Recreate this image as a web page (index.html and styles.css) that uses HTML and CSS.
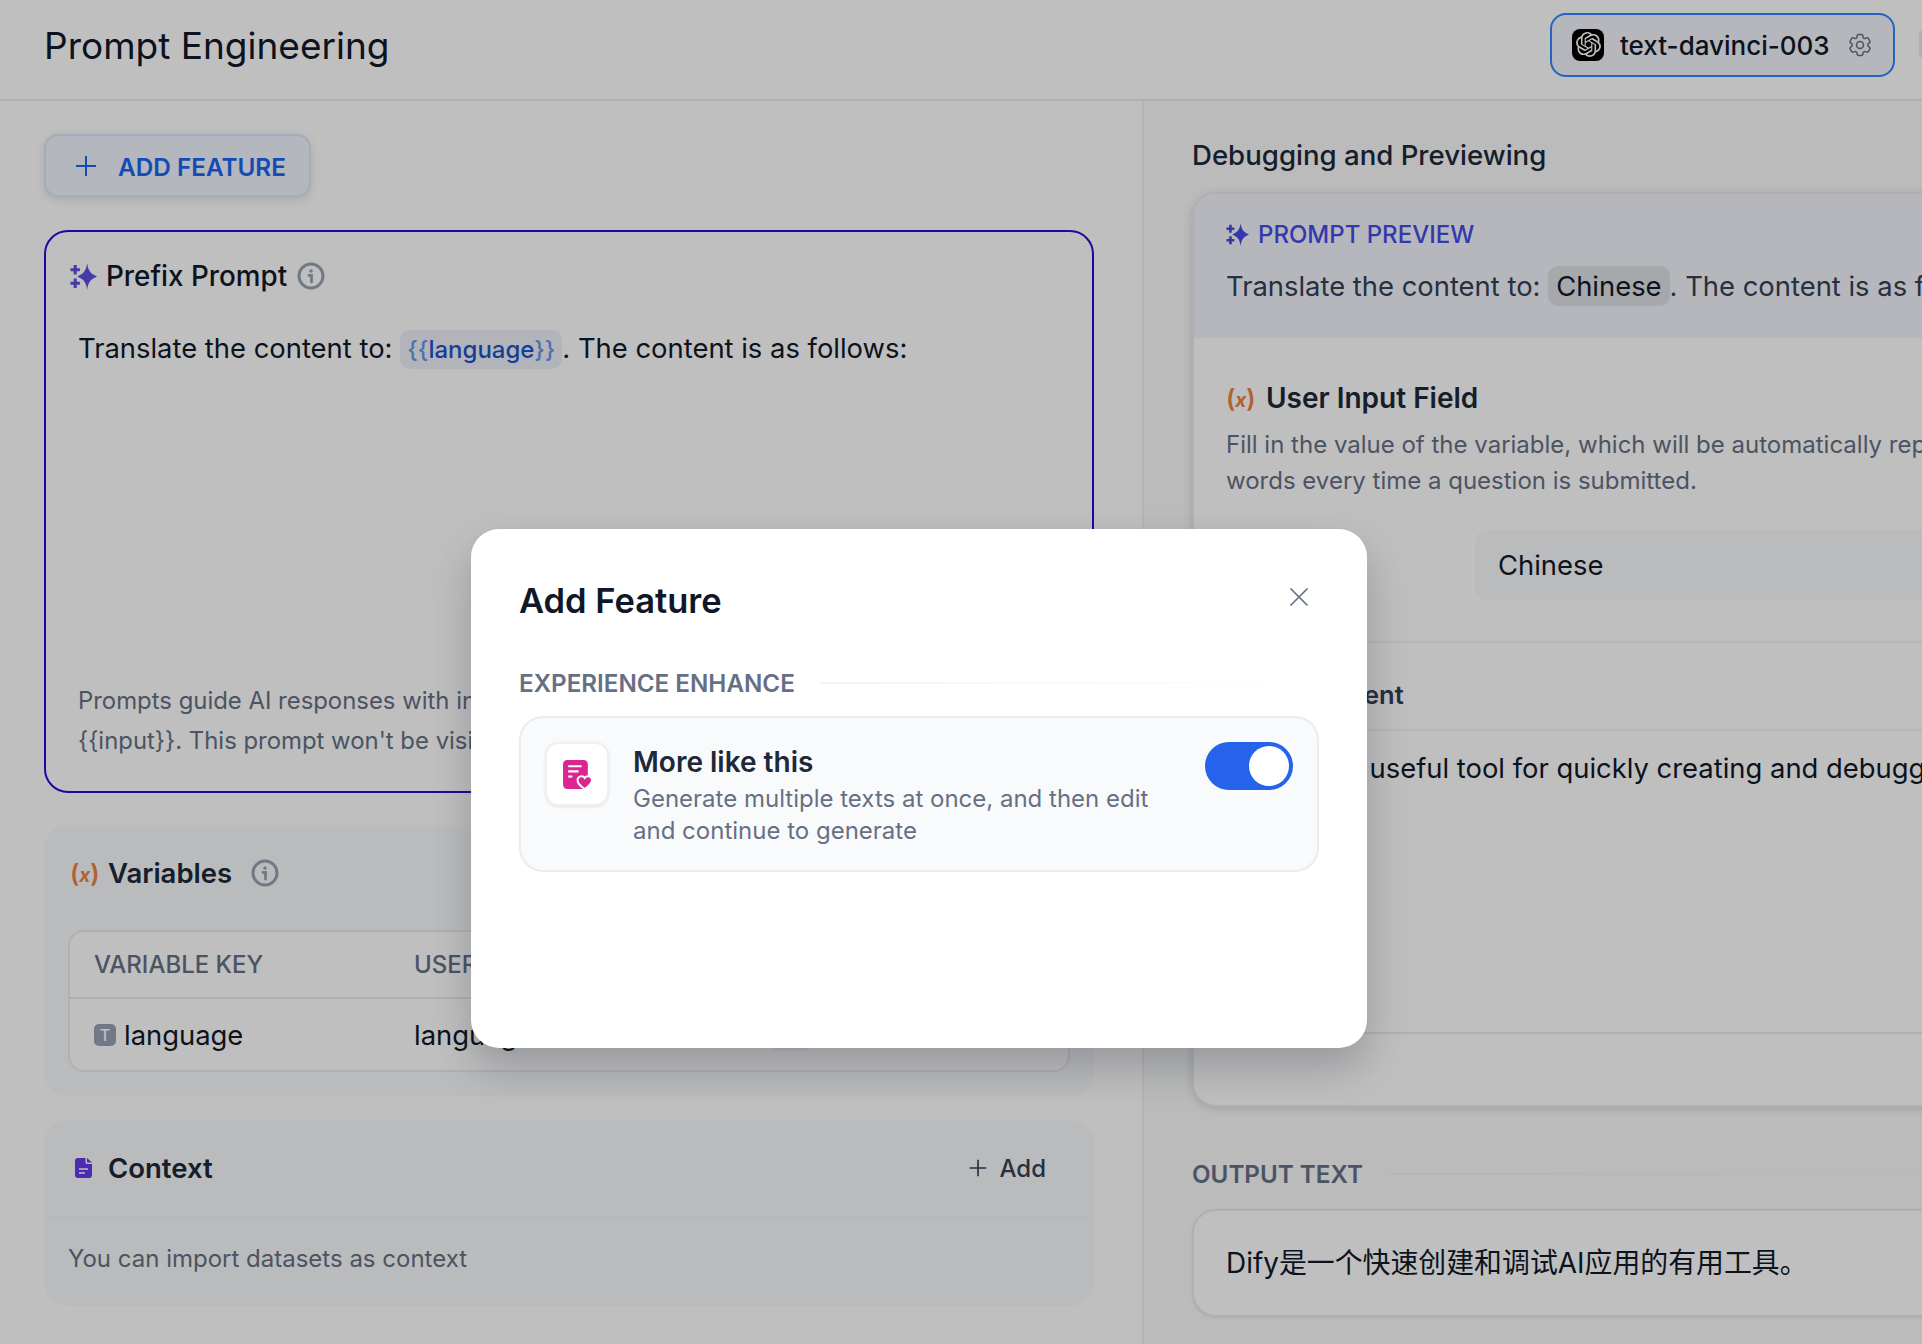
FILE: index.html

```html
<!DOCTYPE html>
<html lang="en">
<head>
  <meta charset="UTF-8" />
  <title>Prompt Engineering</title>
  <link rel="stylesheet" href="styles.css">
</head>
<body>

  <svg class="defs" width="0" height="0">
    <symbol id="sparkles" viewBox="0 0 26 26">
      <path d="M16.500 0c1 7.500 3 10 9.500 13-6.500 3-8.500 5.500-9.500 13-1-7.500-3-10-9.500-13 6.500-3 8.500-5.500 9.500-13z"/>
      <path d="M3.500 2h3v3h3v3h-3v3h-3V8h-3V5h3zM3.500 15h3v3h3v3h-3v3h-3v-3h-3v-3h3z"/>
    </symbol>
    <symbol id="info" viewBox="0 0 28 28">
      <circle cx="14" cy="14" r="12" fill="none" stroke="currentColor" stroke-width="3"/>
      <circle cx="14" cy="9" r="1.800" fill="currentColor"/>
      <path d="M12 13.500h2.500v6.500" fill="none" stroke="currentColor" stroke-width="2.800" stroke-linecap="round"/>
    </symbol>
    <symbol id="plus" viewBox="0 0 24 24">
      <path d="M12 2v20M2 12h20" fill="none" stroke="currentColor" stroke-width="2"/>
    </symbol>
  </svg>

  <header class="topbar">
    <h1 class="page-title">Prompt Engineering</h1>
    <button class="model-btn">
      <span class="model-logo">
        <svg viewBox="0 0 24 24" width="25" height="25" fill="#fff"><path d="M22.2819 9.8211a5.9847 5.9847 0 0 0-.5157-4.9108 6.0462 6.0462 0 0 0-6.5098-2.9A6.0651 6.0651 0 0 0 4.9807 4.1818a5.9847 5.9847 0 0 0-3.9977 2.9 6.0462 6.0462 0 0 0 .7427 7.0966 5.98 5.98 0 0 0 .511 4.9107 6.051 6.051 0 0 0 6.5146 2.9001A5.9847 5.9847 0 0 0 13.2599 24a6.0557 6.0557 0 0 0 5.7718-4.2058 5.9894 5.9894 0 0 0 3.9977-2.9001 6.0557 6.0557 0 0 0-.7475-7.0729zm-9.022 12.6081a4.4755 4.4755 0 0 1-2.8764-1.0408l.1419-.0804 4.7783-2.7582a.7948.7948 0 0 0 .3927-.6813v-6.7369l2.02 1.1686a.071.071 0 0 1 .038.052v5.5826a4.504 4.504 0 0 1-4.4945 4.4944zm-9.6607-4.1254a4.4708 4.4708 0 0 1-.5346-3.0137l.142.0852 4.783 2.7582a.7712.7712 0 0 0 .7806 0l5.8428-3.3685v2.3324a.0804.0804 0 0 1-.0332.0615L9.74 19.9502a4.4992 4.4992 0 0 1-6.1408-1.6464zM2.3408 7.8956a4.485 4.485 0 0 1 2.3655-1.9728V11.6a.7664.7664 0 0 0 .3879.6765l5.8144 3.3543-2.0201 1.1685a.0757.0757 0 0 1-.071 0l-4.8303-2.7865A4.504 4.504 0 0 1 2.3408 7.872zm16.5963 3.8558L13.1038 8.364 15.1192 7.2a.0757.0757 0 0 1 .071 0l4.8303 2.7913a4.4944 4.4944 0 0 1-.6765 8.1042v-5.6772a.79.79 0 0 0-.407-.667zm2.0107-3.0231l-.142-.0852-4.7735-2.7818a.7759.7759 0 0 0-.7854 0L9.409 9.2297V6.8974a.0662.0662 0 0 1 .0284-.0615l4.8303-2.7866a4.4992 4.4992 0 0 1 6.6802 4.66zM8.3065 12.863l-2.02-1.1638a.0804.0804 0 0 1-.038-.0567V6.0742a4.4992 4.4992 0 0 1 7.3757-3.4537l-.142.0805L8.704 5.459a.7948.7948 0 0 0-.3927.6813zm1.0976-2.3654l2.602-1.4998 2.6069 1.4998v2.9994l-2.5974 1.4997-2.6067-1.4997Z"/></svg>
      </span>
      <span class="model-name">text-davinci-003</span>
      <svg class="gear" viewBox="0 0 24 24" width="28" height="28" fill="none" stroke="currentColor" stroke-width="1.300"><path d="M9.594 3.94c.09-.542.56-.94 1.11-.94h2.593c.55 0 1.02.398 1.11.94l.213 1.281c.063.374.313.686.645.87.074.04.147.083.22.127.325.196.72.257 1.075.124l1.217-.456a1.125 1.125 0 0 1 1.37.49l1.296 2.247a1.125 1.125 0 0 1-.26 1.431l-1.003.827c-.293.241-.438.613-.43.992a7.723 7.723 0 0 1 0 .255c-.008.378.137.75.43.991l1.004.827c.424.35.534.955.26 1.43l-1.298 2.247a1.125 1.125 0 0 1-1.369.491l-1.217-.456c-.355-.133-.75-.072-1.076.124a6.47 6.47 0 0 1-.22.128c-.331.183-.581.495-.644.869l-.213 1.281c-.09.543-.56.94-1.11.94h-2.594c-.55 0-1.019-.398-1.11-.94l-.213-1.281c-.062-.374-.312-.686-.644-.87a6.52 6.52 0 0 1-.22-.127c-.325-.196-.72-.257-1.076-.124l-1.217.456a1.125 1.125 0 0 1-1.369-.49l-1.297-2.247a1.125 1.125 0 0 1 .26-1.431l1.004-.827c.292-.24.437-.613.43-.991a6.932 6.932 0 0 1 0-.255c.007-.38-.138-.751-.43-.992l-1.004-.827a1.125 1.125 0 0 1-.26-1.43l1.297-2.247a1.125 1.125 0 0 1 1.37-.491l1.216.456c.356.133.751.072 1.076-.124.072-.044.146-.086.22-.128.332-.183.582-.495.644-.869l.214-1.28Z"/><circle cx="12" cy="12" r="3"/></svg>
    </button>
    <span class="publish-stub"></span>
  </header>

  <main class="workspace">
    <section class="config-pane">
      <button class="add-feature-btn">
        <svg width="24" height="24"><use href="#plus"/></svg>
        ADD FEATURE
      </button>

      <div class="prefix-card">
        <div class="section-head">
          <svg class="sparkle" width="27" height="27"><use href="#sparkles"/></svg>
          <span class="prefix-title">Prefix Prompt</span>
          <svg class="info" width="28" height="28"><use href="#info"/></svg>
        </div>
        <p class="prefix-text">Translate the content to: <span class="var-chip"><i>{{</i>language<i>}}</i></span>. The content is as follows:</p>
        <p class="prefix-hint">Prompts guide AI responses with instructions and constraints.<br>{{input}}. This prompt won't be visible to users.</p>
      </div>

      <div class="variables-card">
        <div class="section-head">
          <span class="var-icon">(<i>x</i>)</span>
          <span class="card-title">Variables</span>
          <svg class="info info-wide" width="28" height="28"><use href="#info"/></svg>
        </div>
        <div class="var-table">
          <div class="var-row var-row-head">
            <span>VARIABLE KEY</span>
            <span>USER INPUT FORM NAME</span>
          </div>
          <div class="var-row">
            <span class="var-key"><b class="type-badge">T</b>language</span>
            <span>language</span>
            <span class="row-chip"></span>
            <span class="row-action"></span>
          </div>
        </div>
      </div>

      <div class="context-card">
        <div class="context-head">
          <span class="doc-box">
            <svg width="17" height="20" viewBox="0 0 17 20"><path d="M3 0h7.500v4.500a1.500 1.500 0 0 0 1.500 1.500h5v11a3 3 0 0 1-3 3H3a3 3 0 0 1-3-3V3a3 3 0 0 1 3-3z" fill="#6938ef"/><path d="M12 0l5 4.500h-5z" fill="#6938ef"/><path d="M4 11h9M4 15h6" stroke="#fff" stroke-width="1.600"/></svg>
          </span>
          <span class="card-title">Context</span>
          <span class="context-add">
            <svg width="20" height="20"><use href="#plus"/></svg>
            Add
          </span>
        </div>
        <p class="context-text">You can import datasets as context</p>
      </div>
    </section>

    <section class="debug-pane">
      <h2 class="debug-title">Debugging and Previewing</h2>

      <div class="debug-card">
        <div class="preview-block">
          <div class="preview-label">
            <svg width="23" height="23"><use href="#sparkles"/></svg>
            PROMPT PREVIEW
          </div>
          <p class="preview-text">Translate the content to: <span class="value-chip">Chinese</span>. The content is as follows:</p>
        </div>

        <div class="input-block">
          <div class="input-head">
            <span class="var-icon">(<i>x</i>)</span>
            <span class="card-title">User Input Field</span>
          </div>
          <p class="input-desc">Fill in the value of the variable, which will be automatically replaced in the prompt<br>words every time a question is submitted.</p>
          <div class="input-row">
            <span class="input-label">language</span>
            <span class="input-value">Chinese</span>
          </div>
        </div>

        <div class="query-head">Query Content</div>
        <div class="query-body">Dify is a useful tool for quickly creating and debugging AI applications.</div>
        <div class="query-foot"></div>
      </div>

      <div class="output-label">
        <span>OUTPUT TEXT</span>
        <span class="fade-line"></span>
      </div>
      <div class="output-box">Dify是一个快速创建和调试AI应用的有用工具。</div>
    </section>
  </main>

  <div class="overlay"></div>

  <div class="modal">
    <div class="modal-head">
      <h3 class="modal-title">Add Feature</h3>
      <svg class="modal-close" width="20" height="20" viewBox="0 0 20 20"><path d="M1.500 1.500l17 17M18.500 1.500l-17 17" fill="none" stroke="currentColor" stroke-width="1.700"/></svg>
    </div>
    <div class="group-label">
      <span>EXPERIENCE ENHANCE</span>
      <span class="fade-line"></span>
    </div>
    <div class="feature-card">
      <span class="feature-tile">
        <svg width="31" height="31" viewBox="0 0 30 30">
          <rect x="1" y="1" width="24" height="28" rx="4" fill="#dd2590"/>
          <path d="M6 7h13M6 12h10" stroke="#fff" stroke-width="2"/>
          <path d="M6 17h4" stroke="#fff" stroke-width="2"/>
          <path d="M22 29c-4-3-7-5-7-8.500a3.800 3.800 0 0 1 7-2 3.800 3.800 0 0 1 7 2c0 3.500-3 5.500-7 8.500z" fill="#dd2590" stroke="#fff" stroke-width="1.800"/>
        </svg>
      </span>
      <div class="feature-text">
        <div class="feature-name">More like this</div>
        <p class="feature-desc">Generate multiple texts at once, and then edit and continue to generate</p>
      </div>
      <span class="toggle"><span class="knob"></span></span>
    </div>
  </div>

</body>
</html>
```

FILE: styles.css

```css
* {
  box-sizing: border-box;
}
html, body {
  margin: 0;
  width: 1922px;
  height: 1344px;
  overflow: hidden;
}
body {
  position: relative;
  background-color: #fff;
  color: #101828;
  font-family: Inter, "Noto Sans CJK SC", sans-serif;
  font-size: 27.400px;
}
p, h1, h2, h3 {
  margin: 0;
}
button {
  font-family: inherit;
}
.defs {
  position: absolute;
}

/* top bar */
.topbar {
  display: flex;
  align-items: center;
  height: 101px;
  padding-left: 44px;
  border-bottom: 2px solid #ebebef;
}
.page-title {
  flex: 1;
  margin-top: -8px;
  font-size: 37px;
  font-weight: 400;
}
.model-btn {
  display: flex;
  align-items: center;
  width: 345px;
  height: 64px;
  margin-top: -10px;
  padding: 0 19px 0 20px;
  background-color: #f2f4fb;
  border: 2px solid #2e86ff;
  border-radius: 16px;
  color: #101828;
}
.model-logo {
  display: flex;
  align-items: center;
  justify-content: center;
  width: 32px;
  height: 32px;
  background-color: #000;
  border-radius: 8px;
}
.model-name {
  flex: 1;
  margin-left: 16px;
  padding-top: 2px;
  text-align: left;
  font-size: 26px;
  font-weight: 500;
  white-space: nowrap;
}
.gear {
  color: #667085;
}
.publish-stub {
  width: 3px;
  height: 26px;
  margin-top: -11px;
  margin-left: 24px;
  background-color: #e8e8ee;
}

/* page columns */
.workspace {
  display: flex;
  height: 1243px;
}
.config-pane {
  flex: none;
  width: 1142px;
  padding: 33px 48px 0 44px;
}
.debug-pane {
  flex: none;
  width: 780px;
  padding: 34px 0 0 48px;
  background-color: #f8faf9;
  border-left: 2px solid #f0f0f2;
}

/* left column */
.add-feature-btn {
  display: flex;
  align-items: center;
  gap: 20px;
  width: 267px;
  height: 63px;
  padding: 2px 0 0 28px;
  background-color: #f1f4fd;
  border: 2px solid #dbe6f8;
  border-radius: 14px;
  box-shadow: 0 3px 8px rgba(16, 24, 40, 0.12);
  color: #1c64f2;
  font-size: 24.300px;
  font-weight: 600;
  white-space: nowrap;
}
.add-feature-btn svg {
  flex: none;
  margin-top: -2px;
}
.prefix-card {
  display: flex;
  flex-direction: column;
  height: 563px;
  margin-top: 33px;
  padding: 22px 24px 30px 24px;
  border: 2px solid #2a0ad8;
  border-radius: 24px;
}
.section-head {
  display: flex;
  align-items: center;
  height: 44px;
}
.sparkle {
  flex: none;
  margin-right: 9px;
  fill: #5d4fe0;
}
.prefix-title {
  font-size: 27.800px;
  font-weight: 500;
}
.info {
  flex: none;
  margin-left: 10px;
  color: #98a2b3;
}
.info-wide {
  margin-left: 19px;
}
.prefix-text {
  margin: 32px 0 0 8px;
  line-height: 34px;
  white-space: nowrap;
}
.var-chip {
  display: inline-block;
  padding: 0 7px;
  height: 39px;
  line-height: 39px;
  background-color: #eff1f9;
  border-radius: 10px;
  color: #1c53c8;
  font-size: 24px;
  font-weight: 500;
}
.var-chip i {
  font-style: normal;
  color: #6a96e6;
}
.prefix-hint {
  margin: auto 0 0 2px;
  padding-left: 6px;
  color: #667085;
  font-size: 23.900px;
  line-height: 40px;
  white-space: nowrap;
}
.var-icon {
  flex: none;
  display: block;
  width: 38px;
  color: #ec8243;
  font-size: 25px;
  font-weight: 600;
  white-space: nowrap;
}
.var-icon i {
  font-size: 19px;
  font-weight: 700;
}
.input-head .var-icon {
  width: 40px;
}
.card-title {
  color: #1d2939;
  font-size: 27.500px;
  font-weight: 600;
}
.input-head .card-title {
  font-size: 28px;
}
.variables-card {
  height: 271px;
  margin-top: 32px;
  padding: 26px 24px 0 26px;
  background-color: #f9fafb;
  border-radius: 24px;
}
.var-table {
  height: 142px;
  margin: 35px 0 0 -2px;
  background-color: #fff;
  border: 2px solid #e9ebf0;
  border-radius: 16px;
}
.var-row {
  display: grid;
  grid-template-columns: 320px 356px 226px 1fr;
  align-items: center;
  height: 71px;
  padding-left: 24px;
  white-space: nowrap;
  overflow: hidden;
}
.var-row-head {
  height: 67px;
  border-bottom: 2px solid #e9ebf0;
  color: #667085;
  font-size: 24px;
  font-weight: 500;
}
.var-key {
  display: flex;
  align-items: center;
  gap: 8px;
}
.type-badge {
  display: flex;
  align-items: center;
  justify-content: center;
  width: 22px;
  height: 22px;
  background-color: #98a2b3;
  border-radius: 5px;
  color: #fff;
  font-size: 16px;
  font-weight: 500;
}
.row-chip {
  width: 40px;
  height: 32px;
  background-color: #f2f4f7;
  border-radius: 8px;
}
.row-action {
  width: 18px;
  height: 26px;
  border-bottom: 3px solid #667085;
}
.context-card {
  height: 186px;
  margin-top: 24px;
  background-color: #f9fafb;
  border-radius: 24px;
}
.context-head {
  display: flex;
  align-items: center;
  height: 97px;
  padding: 0 48px 0 26px;
  border-bottom: 1px solid #f2f4f7;
}
.doc-box {
  display: flex;
  justify-content: center;
  width: 26px;
  margin-right: 12px;
}
.context-add {
  display: flex;
  align-items: center;
  gap: 12px;
  margin-left: auto;
  color: #344054;
  font-size: 24px;
  font-weight: 500;
}
.context-text {
  padding: 24px 0 0 24px;
  color: #667085;
  font-size: 24px;
  line-height: 36px;
  white-space: nowrap;
}

/* right column */
.debug-title {
  height: 40px;
  line-height: 40px;
  color: #1d2939;
  font-size: 27.600px;
  font-weight: 500;
}
.debug-card {
  width: 1000px;
  height: 915px;
  margin-top: 17px;
  background-color: #fff;
  border: 2px solid #ebebef;
  border-radius: 24px;
  box-shadow: 0 2px 8px rgba(16, 24, 40, 0.14);
  overflow: hidden;
}
.preview-block {
  height: 144px;
  padding: 22px 32px 0 32px;
  background-color: #f3f5fd;
}
.preview-label {
  display: flex;
  align-items: center;
  gap: 9px;
  height: 36px;
  color: #444ce7;
  font-size: 24px;
  font-weight: 500;
}
.preview-label svg {
  fill: #444ce7;
}
.preview-text {
  margin-top: 14px;
  line-height: 40px;
  color: #344054;
  white-space: nowrap;
}
.value-chip {
  display: inline-block;
  padding: 0 8px;
  background-color: #dfe0e6;
  border-radius: 10px;
  color: #101828;
}
.input-block {
  height: 305px;
  padding: 40px 32px 0 32px;
  border-bottom: 2px solid #f2f4f7;
}
.input-head {
  display: flex;
  align-items: center;
  height: 40px;
}
.input-desc {
  margin-top: 9px;
  color: #667085;
  font-size: 24px;
  line-height: 36px;
  white-space: nowrap;
}
.input-row {
  display: flex;
  align-items: center;
  margin-top: 31px;
}
.input-label {
  width: 249px;
}
.input-value {
  flex: 1;
  height: 70px;
  line-height: 71px;
  padding-left: 23px;
  background-color: #f9fafb;
  border-radius: 12px;
}
.query-head {
  height: 88px;
  padding: 33px 0 0 29px;
  line-height: 38px;
  border-bottom: 2px solid #f2f4f7;
  color: #344054;
  font-size: 25.500px;
  font-weight: 600;
}
.query-body {
  height: 301px;
  padding: 17px 0 0 64px;
  line-height: 40px;
  white-space: nowrap;
}
.query-foot {
  height: 72px;
  border-top: 2px solid #ebebef;
}
.output-label, .group-label {
  display: flex;
  align-items: center;
  gap: 24px;
  color: #667085;
  font-size: 24.200px;
  font-weight: 600;
  white-space: nowrap;
}
.output-label {
  width: 1000px;
  height: 32px;
  margin-top: 51px;
}
.fade-line {
  flex: 1;
  height: 2px;
  background: linear-gradient(to right, #f2f4f7, rgba(242, 244, 247, 0));
}
.output-box {
  width: 1000px;
  height: 108px;
  margin-top: 19px;
  padding-left: 32px;
  line-height: 104px;
  background-color: #fff;
  border: 2px solid #ebebef;
  border-radius: 24px;
  box-shadow: 0 1px 3px rgba(16, 24, 40, 0.08);
  font-size: 27.900px;
  white-space: nowrap;
}

/* dimmed layer and dialog */
.overlay {
  position: absolute;
  inset: 0;
  background-color: rgba(0, 0, 0, 0.25);
}
.modal {
  position: absolute;
  left: 471px;
  top: 529px;
  width: 896px;
  height: 519px;
  padding: 50px 48px 0 48px;
  background-color: #fff;
  border-radius: 28px;
  box-shadow: 0 20px 40px rgba(16, 24, 40, 0.22);
}
.modal-head {
  display: flex;
  justify-content: space-between;
  height: 44px;
}
.modal-title {
  font-size: 34.500px;
  font-weight: 600;
  line-height: 44px;
  color: #101828;
}
.modal-close {
  margin: 8px 10px 0 0;
  color: #667085;
}
.group-label {
  height: 32px;
  margin-top: 44px;
}
.feature-card {
  display: flex;
  align-items: flex-start;
  height: 156px;
  margin-top: 17px;
  padding: 24px 24px 0 24px;
  background-color: #f9fafb;
  border: 2px solid #eaecf0;
  border-radius: 24px;
}
.feature-tile {
  flex: none;
  display: flex;
  align-items: center;
  justify-content: center;
  width: 64px;
  height: 64px;
  background-color: #fff;
  border: 2px solid #eff0f2;
  border-radius: 14px;
  box-shadow: 0 1px 3px rgba(16, 24, 40, 0.1);
}
.feature-text {
  flex: 1;
  margin-left: 24px;
}
.feature-name {
  line-height: 41px;
  color: #1d2939;
  font-size: 28px;
  font-weight: 600;
}
.feature-desc {
  width: 540px;
  color: #667085;
  font-size: 24px;
  line-height: 32px;
}
.toggle {
  flex: none;
  display: flex;
  align-items: center;
  justify-content: flex-end;
  width: 88px;
  height: 48px;
  padding-right: 4px;
  background-color: #2563eb;
  border-radius: 24px;
}
.knob {
  width: 40px;
  height: 40px;
  background-color: #fff;
  border-radius: 50%;
}
```
